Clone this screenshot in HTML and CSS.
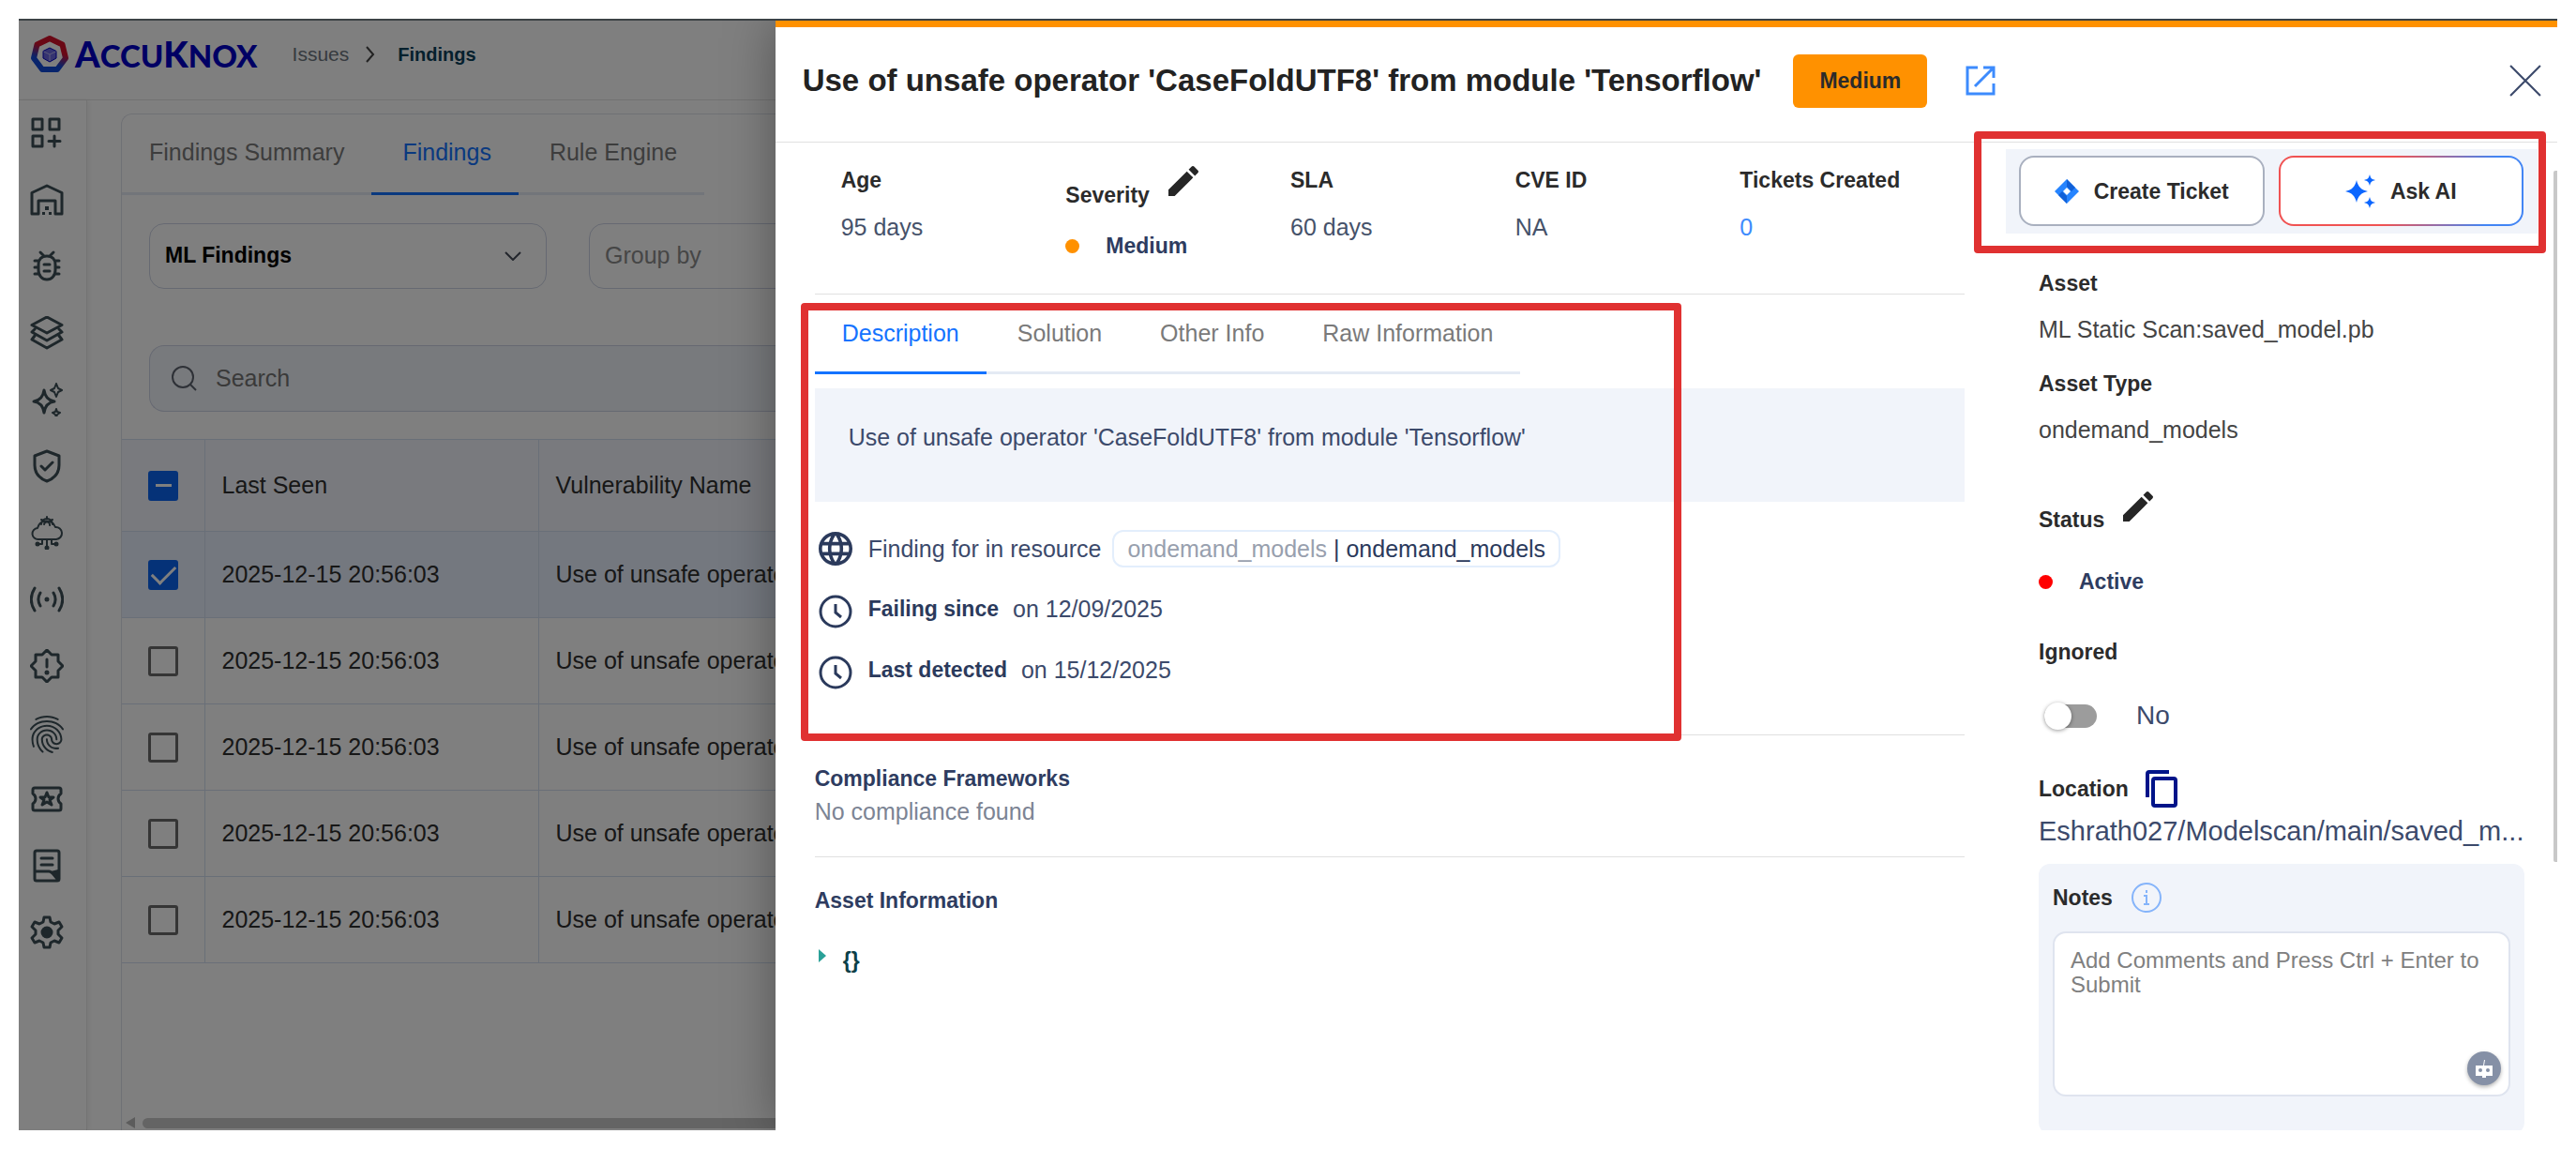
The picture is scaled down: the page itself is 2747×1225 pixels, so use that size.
FILE: index.html
```html
<!DOCTYPE html>
<html lang="en">
<head>
  <meta charset="UTF-8">
  <title>AccuKnox - Findings</title>
  <link rel="stylesheet" href="styles.css">
</head>
<body>

<div class="app">

  <!-- Top bar -->
  <header class="topbar">
    <a class="brand" href="#">
      <svg class="brand-mark" viewBox="0 0 42 42">
        <defs>
          <linearGradient id="brand-ring" x1="0.7" y1="0" x2="0.3" y2="1">
            <stop offset="0.35" stop-color="#d4102a"/>
            <stop offset="0.75" stop-color="#1048d8"/>
          </linearGradient>
        </defs>
        <path d="M21 4 L34.500 10.500 L38 25 L29 37 H13 L4 25 L7.500 10.500 Z" fill="none" stroke="url(#brand-ring)" stroke-width="6" stroke-linejoin="round"/>
        <path d="M21 14 L28 17.500 V25 L21 29 L14 25 V17.500 Z" fill="#6a66e0"/>
        <path d="M14.500 18 L21 21 L27.500 18 M21 21 V28" fill="none" stroke="#b8b6f4" stroke-width="1"/>
      </svg>
      <span class="brand-name"><b>A</b>CCU<b>K</b>NOX</span>
    </a>
    <nav class="breadcrumb">
      <a href="#">Issues</a>
      <svg viewBox="0 0 10 20"><path d="M1 2 L8 10 L1 18"/></svg>
      <a class="current" href="#">Findings</a>
    </nav>
  </header>

  <div class="layout">
    <!-- Icon rail -->
    <nav class="rail">
      <a href="#" aria-label="Dashboard">
        <svg viewBox="0 0 36 36"><path d="M3 3h10v11H3z M21 3h10v11H21z M3 21h10v11H3z M26 21v11 M20 26.500h12"/></svg>
      </a>
      <a href="#" aria-label="Inventory">
        <svg viewBox="0 0 36 36"><path d="M2 33V10.500L18 3l16 7.500V33h-7V19H9v14z"/><path d="M16 25h4v4h-4z M13 31h3v3h-3z M20 31h3v3h-3z" fill="currentColor" stroke="none"/></svg>
      </a>
      <a href="#" aria-label="Issues">
        <svg viewBox="0 0 36 36"><path d="M18 7c-6 0-9 4-9 9v6c0 6 4 10 9 10s9-4 9-10v-6c0-5-3-9-9-9z M11 3l4 4 M25 3l-4 4 M5 12h4 M5 19h4 M5 26h4 M27 12h4 M27 19h4 M27 26h4 M15 16h6 M15 23h6"/></svg>
      </a>
      <a href="#" aria-label="Compliance">
        <svg viewBox="0 0 36 36"><path d="M18 1l16 8.500L18 18 2 9.500z M5 14l-3 3 16 9 16-9-3-3 M5 21l-3 4 16 9 16-9-3-4"/></svg>
      </a>
      <a href="#" aria-label="AI security">
        <svg viewBox="0 0 36 36"><path d="M15 8c1 7 4 11 11 12-7 1-10 5-11 12-1-7-4-11-11-12 7-1 10-5 11-12z"/><path class="thin" d="M28 1l2 5 4 2-4 2-2 5-2-5-4-2 4-2z M28 28l1 3 3 1-3 2-1 3-1-3-3-2 3-1z"/></svg>
      </a>
      <a href="#" aria-label="Runtime protection">
        <svg viewBox="0 0 36 36"><path d="M18 2l13 5v10c0 8-5 14-13 17C10 31 5 25 5 17V7z M12 18l4 4 8-8"/></svg>
      </a>
      <a href="#" aria-label="Cloud workloads">
        <svg viewBox="0 0 36 36"><path class="thin" d="M9 25a6 6 0 0 1-1-12 10 10 0 0 1 19-1 6.500 6.500 0 0 1 1 13z M12 9a6 6 0 1 1 12 0 M15 9a3 3 0 1 1 6 1 M18 25v9 M13 25v5H8 M23 25v5h5"/><circle cx="18" cy="34" r="1"/><circle cx="8" cy="30" r="1"/><circle cx="28" cy="30" r="1"/><path class="thin" d="M12 4l2 1 M24 4l-2 1 M18 1v2"/></svg>
      </a>
      <a href="#" aria-label="Monitoring">
        <svg viewBox="0 0 36 36"><path d="M5 6c-5 8-5 16 0 24 M11 11c-3 5-3 9 0 14 M31 6c5 8 5 16 0 24 M25 11c3 5 3 9 0 14"/><circle cx="18" cy="18" r="1" fill="currentColor"/></svg>
      </a>
      <a href="#" aria-label="Alerts">
        <svg viewBox="0 0 36 36"><path d="M18 1l5 5h7v7l5 5-5 5v7h-7l-5 5-5-5H6v-7l-5-5 5-5V6h7z M18 11v8"/><circle cx="18" cy="25" r="1" fill="currentColor"/></svg>
      </a>
      <a href="#" aria-label="Identity">
        <svg class="filled" viewBox="3 2 18 20"><path d="M17.810 4.470c-.08 0-.16-.02-.23-.06C15.660 3.420 14 3 12.010 3c-1.980 0-3.860.47-5.570 1.410-.24.13-.54.04-.68-.2-.13-.24-.04-.55.2-.68C7.820 2.520 9.860 2 12.010 2c2.130 0 3.990.47 6.030 1.520.25.13.34.43.21.67-.09.18-.26.28-.44.28zM3.500 9.720c-.1 0-.2-.03-.29-.09-.23-.16-.28-.47-.12-.7.99-1.400 2.250-2.500 3.750-3.270C9.980 4.040 14 4.030 17.150 5.650c1.500.77 2.760 1.860 3.750 3.250.16.22.11.54-.12.7-.23.16-.54.11-.7-.12-.9-1.260-2.040-2.250-3.390-2.940-2.870-1.470-6.540-1.470-9.400.01-1.360.7-2.500 1.700-3.400 2.960-.08.14-.23.21-.39.21zm6.250 12.070c-.13 0-.26-.05-.35-.15-.87-.87-1.340-1.430-2.010-2.640-.69-1.230-1.050-2.730-1.050-4.340 0-2.970 2.540-5.390 5.660-5.390s5.660 2.420 5.660 5.390c0 .28-.22.5-.5.5s-.5-.22-.5-.5c0-2.420-2.090-4.390-4.660-4.390-2.570 0-4.660 1.970-4.660 4.390 0 1.440.32 2.770.93 3.850.64 1.150 1.080 1.640 1.850 2.420.19.2.19.51 0 .71-.11.1-.24.15-.37.15zm7.170-1.850c-1.190 0-2.240-.3-3.100-.89-1.490-1.010-2.380-2.650-2.380-4.390 0-.28.22-.5.5-.5s.5.22.5.5c0 1.410.72 2.740 1.940 3.560.71.48 1.540.71 2.540.71.24 0 .64-.03 1.040-.1.27-.05.53.13.58.41.05.27-.13.53-.41.58-.57.11-1.070.12-1.210.12zM14.910 22c-.04 0-.09-.01-.13-.02-1.590-.44-2.630-1.030-3.720-2.100-1.400-1.390-2.170-3.240-2.170-5.220 0-1.620 1.380-2.940 3.080-2.940 1.700 0 3.080 1.320 3.080 2.940 0 1.070.93 1.940 2.080 1.940s2.080-.87 2.080-1.940c0-3.770-3.250-6.830-7.250-6.830-2.840 0-5.440 1.580-6.610 4.030-.39.81-.59 1.760-.59 2.800 0 .78.07 2.010.67 3.610.1.26-.03.55-.29.64-.26.1-.55-.04-.64-.29-.49-1.310-.73-2.610-.73-3.960 0-1.200.23-2.290.68-3.240 1.330-2.790 4.280-4.600 7.510-4.600 4.550 0 8.250 3.510 8.250 7.830 0 1.620-1.380 2.940-3.080 2.940s-3.080-1.320-3.080-2.940c0-1.070-.93-1.940-2.080-1.940s-2.080.87-2.080 1.940c0 1.710.66 3.310 1.870 4.510.95.94 1.860 1.460 3.270 1.850.27.07.42.35.35.61-.05.23-.26.38-.47.38z"/></svg>
      </a>
      <a href="#" aria-label="Tickets">
        <svg viewBox="0 0 36 36"><path d="M5 6h26a2 2 0 0 1 2 2v4c-4 3-4 8 0 11v5a2 2 0 0 1-2 2H5a2 2 0 0 1-2-2v-5c4-3 4-8 0-11V8a2 2 0 0 1 2-2z"/><path d="M18 11l2 5h5l-4 3 2 5-5-3-5 3 2-5-4-3h5z"/></svg>
      </a>
      <a href="#" aria-label="Reports">
        <svg viewBox="0 0 36 36"><path d="M7 2h22a2 2 0 0 1 2 2v28a2 2 0 0 1-2 2H7a2 2 0 0 1-2-2V4a2 2 0 0 1 2-2z M12 10h12 M12 17h12 M6 24h14c4 0 5 4 9 8"/><path d="M22 24c4 2 4 6 8 9V22z" fill="currentColor" stroke="none"/></svg>
      </a>
      <a href="#" aria-label="Settings">
        <svg viewBox="0 0 36 36"><path d="M15 2h6l1 5 4 2 5-2 3 5-4 4v4l4 4-3 5-5-2-4 2-1 5h-6l-1-5-4-2-5 2-3-5 4-4v-4l-4-4 3-5 5 2 4-2z"/><circle cx="18" cy="18" r="5" fill="currentColor"/></svg>
      </a>
    </nav>

    <!-- Findings list -->
    <main class="card">
      <div class="tabs page-tabs">
        <button type="button">Findings Summary</button>
        <button type="button" class="active">Findings</button>
        <button type="button">Rule Engine</button>
      </div>

      <div class="filters">
        <div class="select-box">
          <select class="strong" aria-label="Finding type"><option>ML Findings</option></select>
          <svg viewBox="0 0 18 10"><path d="M1 1l8 8 8-8"/></svg>
        </div>
        <div class="select-box">
          <select class="muted" aria-label="Group by"><option>Group by</option></select>
          <svg viewBox="0 0 18 10"><path d="M1 1l8 8 8-8"/></svg>
        </div>
      </div>

      <label class="search">
        <svg viewBox="0 0 28 28"><circle cx="13" cy="13" r="11"/><path d="M21 21l6 6"/></svg>
        <input type="text" placeholder="Search" aria-label="Search">
      </label>

      <table class="findings">
        <thead>
          <tr>
            <th class="pick"><input type="checkbox" class="mixed" aria-label="Select all"></th>
            <th class="seen">Last Seen</th>
            <th>Vulnerability Name</th>
          </tr>
        </thead>
        <tbody>
          <tr class="selected">
            <td class="pick"><input type="checkbox" checked aria-label="Select row 1"></td>
            <td>2025-12-15 20:56:03</td>
            <td>Use of unsafe operator 'CaseFoldUTF8'</td>
          </tr>
          <tr>
            <td class="pick"><input type="checkbox" aria-label="Select row 2"></td>
            <td>2025-12-15 20:56:03</td>
            <td>Use of unsafe operator 'CaseFoldUTF8'</td>
          </tr>
          <tr>
            <td class="pick"><input type="checkbox" aria-label="Select row 3"></td>
            <td>2025-12-15 20:56:03</td>
            <td>Use of unsafe operator 'CaseFoldUTF8'</td>
          </tr>
          <tr>
            <td class="pick"><input type="checkbox" aria-label="Select row 4"></td>
            <td>2025-12-15 20:56:03</td>
            <td>Use of unsafe operator 'CaseFoldUTF8'</td>
          </tr>
          <tr>
            <td class="pick"><input type="checkbox" aria-label="Select row 5"></td>
            <td>2025-12-15 20:56:03</td>
            <td>Use of unsafe operator 'CaseFoldUTF8'</td>
          </tr>
        </tbody>
      </table>

      <div class="hscroll">
        <svg viewBox="0 0 10 12"><path d="M10 0v12L0 6z"/></svg>
        <span></span>
      </div>
    </main>
  </div>

  <div class="backdrop"></div>

  <!-- Finding details -->
  <aside class="drawer">
    <header class="drawer-head">
      <h1>Use of unsafe operator 'CaseFoldUTF8' from module 'Tensorflow'</h1>
      <span class="badge">Medium</span>
      <a class="open-link" href="#" aria-label="Open in new tab">
        <svg viewBox="0 0 32 32"><path d="M13 2H2v28h28V19 M19 2h11v11 M30 2L10 22"/></svg>
      </a>
      <button type="button" class="close" aria-label="Close">
        <svg viewBox="0 0 32 32"><path d="M1 1l30 30M31 1L1 31"/></svg>
      </button>
    </header>

    <div class="drawer-body">
      <div class="info">
        <div class="facts">
          <div class="fact"><h3>Age</h3><p>95 days</p></div>
          <div class="fact">
            <div class="edit-row">
              <h3>Severity</h3>
              <button type="button" aria-label="Edit severity">
                <svg viewBox="3 3 18 18"><path d="M3 17.250V21h3.750L17.810 9.940l-3.750-3.750L3 17.250zM20.710 7.040c.39-.39.39-1.020 0-1.410l-2.340-2.340c-.39-.39-1.020-.39-1.410 0l-1.830 1.830 3.750 3.750 1.830-1.830z"/></svg>
              </button>
            </div>
            <p class="dotted"><span class="dot orange"></span>Medium</p>
          </div>
          <div class="fact"><h3>SLA</h3><p>60 days</p></div>
          <div class="fact"><h3>CVE ID</h3><p>NA</p></div>
          <div class="fact"><h3>Tickets Created</h3><p><a href="#">0</a></p></div>
        </div>

        <section class="description">
          <div class="tabs">
            <button type="button" class="active">Description</button>
            <button type="button">Solution</button>
            <button type="button">Other Info</button>
            <button type="button">Raw Information</button>
          </div>
          <p class="summary">Use of unsafe operator 'CaseFoldUTF8' from module 'Tensorflow'</p>
          <ul class="timeline">
            <li class="resource">
              <svg class="filled" viewBox="2 2 20 20"><path d="M11.990 2C6.470 2 2 6.480 2 12s4.470 10 9.990 10C17.520 22 22 17.520 22 12S17.520 2 11.990 2zm6.930 6h-2.950c-.32-1.250-.78-2.450-1.380-3.560 1.840.63 3.370 1.910 4.330 3.560zM12 4.040c.83 1.200 1.480 2.530 1.910 3.960h-3.820c.43-1.430 1.080-2.760 1.910-3.960zM4.260 14C4.100 13.360 4 12.690 4 12s.1-1.360.26-2h3.380c-.08.66-.14 1.320-.14 2s.06 1.340.14 2H4.260zm.82 2h2.950c.32 1.250.78 2.450 1.380 3.560-1.840-.63-3.370-1.900-4.330-3.560zm2.950-8H5.080c.96-1.660 2.490-2.930 4.330-3.560C8.810 5.550 8.350 6.750 8.030 8zM12 19.960c-.83-1.200-1.480-2.530-1.910-3.960h3.820c-.43 1.430-1.080 2.760-1.910 3.960zM14.340 14H9.660c-.09-.66-.16-1.320-.16-2s.07-1.350.16-2h4.680c.09.65.16 1.320.16 2s-.07 1.340-.16 2zm.25 5.560c.6-1.110 1.060-2.310 1.380-3.560h2.950c-.96 1.650-2.490 2.930-4.330 3.560zM16.360 14c.08-.66.14-1.320.14-2s-.06-1.340-.14-2h3.380c.16.64.26 1.310.26 2s-.1 1.360-.26 2h-3.380z"/></svg>
              <span>Finding for in resource</span>
              <span class="chip"><span>ondemand_models</span> | ondemand_models</span>
            </li>
            <li>
              <svg viewBox="0 0 36 36"><circle cx="18" cy="18" r="16"/><path d="M18 10v9l6 5"/></svg>
              <strong>Failing since</strong>
              <span>on 12/09/2025</span>
            </li>
            <li>
              <svg viewBox="0 0 36 36"><circle cx="18" cy="18" r="16"/><path d="M18 10v9l6 5"/></svg>
              <strong>Last detected</strong>
              <span>on 15/12/2025</span>
            </li>
          </ul>
          <div class="highlight highlight-description"></div>
        </section>

        <section class="block">
          <h3>Compliance Frameworks</h3>
          <p>No compliance found</p>
        </section>

        <section class="block">
          <h3>Asset Information</h3>
          <button type="button" class="json">
            <svg viewBox="0 0 8 14"><path d="M0 0l8 7-8 7z"/></svg>
            <span>{}</span>
          </button>
        </section>
      </div>

      <div class="side">
        <div class="actions">
          <button type="button" class="ticket">
            <svg viewBox="0 0 26 26">
              <path d="M13 0l13 13-13 13L0 13z" fill="#2684ff"/>
              <path d="M13 0v8l5 5 4-4z M13 26v-8l-5-5-4 4z" fill="#1060d8"/>
              <path d="M13 9l4 4-4 4-4-4z" fill="#fff"/>
            </svg>
            Create Ticket
          </button>
          <button type="button" class="ask">
            <svg viewBox="0 0 32 36"><path d="M12 6c1.500 7 5 10.500 12 12-7 1.500-10.500 5-12 12-1.500-7-5-10.500-12-12 7-1.500 10.500-5 12-12z M26 0c1 4 2 5 6 6-4 1-5 2-6 6-1-4-2-5-6-6 4-1 5-2 6-6z M26 24c1 4 2 5 6 6-4 1-5 2-6 6-1-4-2-5-6-6 4-1 5-2 6-6z"/></svg>
            Ask AI
          </button>
          <div class="highlight highlight-actions"></div>
        </div>

        <div class="details">
          <div class="detail"><h3>Asset</h3><p>ML Static Scan:saved_model.pb</p></div>
          <div class="detail"><h3>Asset Type</h3><p>ondemand_models</p></div>
          <div class="detail status">
            <div class="edit-row">
              <h3>Status</h3>
              <button type="button" aria-label="Edit status">
                <svg viewBox="3 3 18 18"><path d="M3 17.250V21h3.750L17.810 9.940l-3.750-3.750L3 17.250zM20.710 7.040c.39-.39.39-1.020 0-1.410l-2.340-2.340c-.39-.39-1.020-.39-1.410 0l-1.830 1.830 3.750 3.750 1.830-1.830z"/></svg>
              </button>
            </div>
            <p class="dotted"><span class="dot red"></span>Active</p>
          </div>
          <div class="detail ignored">
            <h3>Ignored</h3>
            <label class="switch"><input type="checkbox"><span>No</span></label>
          </div>
          <div class="detail location">
            <div class="copy-row">
              <h3>Location</h3>
              <button type="button" aria-label="Copy location">
                <svg viewBox="0 0 34 40"><path d="M2 29V4a2 2 0 0 1 2-2h21"/><path d="M10 9h20a2 2 0 0 1 2 2v25a2 2 0 0 1-2 2H10a2 2 0 0 1-2-2V11a2 2 0 0 1 2-2z"/></svg>
              </button>
            </div>
            <p class="path">Eshrath027/Modelscan/main/saved_m...</p>
          </div>

          <div class="notes">
            <div class="notes-head">
              <label for="notes">Notes</label>
              <svg viewBox="0 0 32 32"><circle cx="16" cy="16" r="15"/><path d="M13 14h3v9 M13 23h6 M16 8v3"/></svg>
            </div>
            <div class="notes-box">
              <textarea id="notes" autofocus placeholder="Add Comments and Press Ctrl + Enter to Submit"></textarea>
              <button type="button" class="bot" aria-label="Writing assistant">
                <svg viewBox="0 0 20 20"><path d="M1 7h8l1-6h1l-1 6h9v11H1z M8 18h4v2H8z" fill="#fff"/><circle cx="6" cy="12" r="2"/><circle cx="14" cy="12" r="2"/></svg>
              </button>
            </div>
          </div>
        </div>
      </div>
    </div>

    <div class="vscroll"></div>
  </aside>
</div>

</body>
</html>
```
FILE: styles.css
```css
* {
  box-sizing: border-box;
}

body {
  margin: 0;
  padding: 20px;
  background: #fff;
  color: #2b2b2b;
  font-family: "Liberation Sans", Arial, sans-serif;
  font-size: 25px;
  line-height: 30px;
}

h1, h3, p, ul {
  margin: 0;
  padding: 0;
}

h3 {
  font-size: 23px;
  line-height: 30px;
}

a {
  color: inherit;
  text-decoration: none;
}

button {
  padding: 0;
  border: none;
  background: none;
  color: inherit;
  font: inherit;
  cursor: pointer;
}

svg {
  display: block;
  flex: none;
  fill: none;
  stroke: currentColor;
}

.app {
  position: relative;
  display: flex;
  flex-direction: column;
  height: calc(100vh - 40px);
  border-top: 2px solid #3c4246;
  overflow: hidden;
}

/* Top bar */
.topbar {
  display: flex;
  align-items: center;
  gap: 37px;
  height: 85px;
  padding: 0 12px 12px;
  border-bottom: 1px solid #e4e4e4;
}

.brand {
  display: flex;
  align-items: center;
  gap: 6px;
  color: #0000c8;
}

.brand-mark {
  width: 42px;
  height: 42px;
}

.brand-name {
  font-family: Lato, sans-serif;
  font-size: 33px;
  font-weight: 900;
}

.brand-name b {
  font-size: 38px;
}

.breadcrumb {
  display: flex;
  align-items: center;
  gap: 18px;
  color: #6e7680;
  font-size: 21px;
}

.breadcrumb svg {
  width: 10px;
  height: 20px;
  stroke: #444;
  stroke-width: 2;
}

.breadcrumb .current {
  margin-left: 6px;
  color: #08405a;
  font-size: 20px;
  font-weight: bold;
}

.layout {
  display: flex;
  flex: 1;
  min-height: 0;
}

/* Icon rail */
.rail {
  display: flex;
  flex-direction: column;
  flex: none;
  gap: 35px;
  width: 73px;
  padding: 17px 0 0 12px;
  border-right: 1px solid #e8e8e8;
  box-shadow: 2px 0 6px rgba(0, 0, 0, 0.06);
  color: #3c4e56;
}

.rail a {
  height: 36px;
}

.rail svg {
  width: 36px;
  height: 36px;
  stroke-width: 3;
  stroke-linejoin: round;
  stroke-linecap: round;
}

.rail .thin {
  stroke-width: 2;
}

svg.filled {
  fill: currentColor;
  stroke: none;
}

.rail .filled {
  height: 40px;
}

/* Findings list */
.card {
  display: flex;
  flex-direction: column;
  flex: 1;
  min-width: 0;
  margin: 14px 0 0 36px;
  border: 1px solid #dfe2ea;
  border-width: 1px 0 0 1px;
  border-radius: 12px 0 0 0;
}

.tabs {
  display: flex;
  align-self: flex-start;
  width: fit-content;
}

.tabs button {
  padding: 26px 29px 26px;
  border-bottom: 3px solid #e4eaf4;
  color: #7a7a7a;
}

.tabs button + button {
  padding-left: 33px;
}

.tabs .active {
  border-bottom-color: #1473ff;
  color: #1473ff;
}

.page-tabs button {
  padding: 25px 29px 28px;
}

.filters {
  display: flex;
  gap: 45px;
  margin: 30px 0 0 29px;
}

.select-box {
  position: relative;
  width: 424px;
}

.select-box select {
  width: 100%;
  height: 70px;
  padding: 0 16px 2px;
  border: 1px solid #cdd3e4;
  border-radius: 16px;
  background: #fff;
  font: inherit;
  appearance: none;
}

.select-box .strong {
  color: #000;
  font-size: 23px;
  font-weight: bold;
}

.select-box .muted {
  color: #8c8c8c;
}

.select-box svg {
  position: absolute;
  top: 30px;
  right: 27px;
  width: 18px;
  height: 10px;
  stroke: #444b58;
  stroke-width: 2;
}

.search {
  display: flex;
  align-items: center;
  gap: 20px;
  width: 26%;
  height: 71px;
  margin: 60px 0 0 29px;
  padding: 0 22px 2px;
  border: 1px solid #cdd3e4;
  border-right: none;
  border-radius: 16px 0 0 16px;
  background: #f1f4fa;
}

.search svg {
  width: 28px;
  height: 28px;
  stroke: #5c626e;
  stroke-width: 2;
}

.search input {
  flex: 1;
  min-width: 0;
  padding: 0;
  border: none;
  outline: none;
  background: none;
  font: inherit;
}

.search input::placeholder {
  color: #757575;
}

.findings {
  width: 100%;
  margin-top: 29px;
  border-collapse: collapse;
  table-layout: fixed;
  color: #2e2e2e;
}

.findings th,
.findings td {
  height: 92px;
  padding: 0 18px 2px;
  border: 1px solid #d3def0;
  border-left: none;
  font-weight: normal;
  text-align: left;
  white-space: nowrap;
}

.findings th {
  height: 98px;
  background: #f2f5fc;
}

.findings .pick {
  width: 88px;
  padding: 0 28px;
}

.findings .seen {
  width: 356px;
}

.findings .selected td {
  background: #e9f0fe;
}

.findings input {
  display: grid;
  place-items: center;
  width: 32px;
  height: 32px;
  margin: 0;
  border: 3px solid #6a6a6a;
  border-radius: 3px;
  appearance: none;
}

.findings input:checked,
.findings .mixed {
  border-color: #0b64f0;
  background: #0b64f0;
}

.findings input:checked::after {
  content: "";
  width: 22px;
  height: 11px;
  margin-bottom: 6px;
  border: solid #fff;
  border-width: 0 0 3px 3px;
  transform: rotate(-45deg);
}

.findings .mixed::after {
  content: "";
  width: 17px;
  height: 3px;
  background: #fff;
}

.hscroll {
  display: flex;
  align-items: center;
  gap: 8px;
  margin-top: auto;
  padding: 0 0 2px 4px;
}

.hscroll svg {
  width: 10px;
  height: 12px;
  fill: #b8b8b8;
  stroke: none;
}

.hscroll span {
  flex: 1;
  height: 11px;
  border-radius: 6px 0 0 6px;
  background: #c8c8c8;
}

.backdrop {
  position: absolute;
  inset: 0;
  background: rgba(0, 0, 0, 0.5);
}

/* Finding details */
.drawer {
  position: absolute;
  top: 0;
  right: 0;
  bottom: 0;
  width: 70.2%;
  border-top: 7px solid #ff9100;
  background: #fff;
  box-shadow: 0 0 50px rgba(0, 0, 0, 0.35);
  overflow: hidden;
}

.drawer-head {
  display: flex;
  align-items: center;
  height: 123px;
  padding: 0 17px 8px 29px;
  border-bottom: 1px solid #e0e0e0;
}

.drawer-head h1 {
  color: #222;
  font-size: 33px;
  line-height: 40px;
}

.badge {
  margin-left: 34px;
  padding: 13px 28px 14px;
  border-radius: 6px;
  background: #ff9100;
  font-size: 23px;
  font-weight: bold;
}

.open-link {
  margin-left: 41px;
  color: #3d8bfd;
}

.open-link svg {
  width: 32px;
  height: 32px;
  stroke-width: 3;
}

.close {
  margin-left: auto;
  color: #3c4a6b;
}

.close svg {
  width: 34px;
  height: 34px;
  stroke-width: 2;
}

.drawer-body {
  display: grid;
  grid-template-columns: minmax(0, 1fr) 567px;
  gap: 44px;
  padding: 0 21px 0 42px;
}

.facts {
  display: grid;
  grid-template-columns: repeat(5, 1fr);
  padding: 25px 0 36px 28px;
  border-bottom: 1px solid #e0e0e0;
}

.fact p {
  margin-top: 20px;
  color: #46526a;
}

.fact a {
  color: #3d8bfd;
}

.edit-row {
  display: flex;
  align-items: flex-start;
  gap: 20px;
}

.edit-row h3 {
  padding-top: 16px;
}

.edit-row svg {
  width: 32px;
  height: 32px;
  fill: #262626;
  stroke: none;
}

.fact .dotted,
.dotted {
  display: flex;
  align-items: center;
  gap: 28px;
  margin-top: 24px;
  color: #2e3c60;
  font-size: 23px;
  font-weight: bold;
}

.dot {
  width: 15px;
  height: 15px;
  border-radius: 50%;
}

.orange {
  background: #ff9100;
}

.red {
  background: #f00;
}

.description {
  position: relative;
  padding-bottom: 48px;
  border-bottom: 1px solid #e0e0e0;
}

.summary {
  margin-top: 15px;
  padding: 37px 36px 54px;
  background: #f1f4fa;
  color: #3c4a6b;
}

.timeline {
  display: flex;
  flex-direction: column;
  gap: 29px;
  margin-top: 30px;
  padding-left: 4px;
  color: #3c4a6b;
  list-style: none;
}

.timeline li {
  display: flex;
  align-items: flex-start;
}

.timeline .resource {
  align-items: center;
}

.timeline svg {
  width: 36px;
  height: 36px;
  margin-right: 17px;
  color: #2b3a5c;
  stroke-width: 3;
}

.timeline strong {
  margin-right: 15px;
  color: #2b3a5c;
  font-size: 23px;
}

.chip {
  margin-left: 12px;
  padding: 3px 14px;
  border: 2px solid #e3eefc;
  border-radius: 12px;
  color: #2b3a5c;
}

.chip span {
  color: #98a0ae;
}

.block {
  padding: 31px 0 33px;
  border-bottom: 1px solid #e0e0e0;
}

.block:last-child {
  border-bottom: none;
}

.block h3 {
  color: #2e3c60;
}

.block p {
  margin-top: 5px;
  color: #7c8494;
}

.json {
  display: flex;
  gap: 18px;
  margin-top: 34px;
  padding-left: 4px;
  color: #0b4048;
  font-size: 23px;
  font-weight: bold;
}

.json svg {
  width: 8px;
  height: 14px;
  margin-top: 3px;
  fill: #2aa198;
  stroke: none;
}

/* Right column */
.actions {
  position: relative;
  display: grid;
  grid-template-columns: 1fr 1fr;
  gap: 15px;
  margin-top: 7px;
  padding: 7px 15px 8px 14px;
  background: #f1f4fa;
}

.actions button {
  display: flex;
  align-items: center;
  justify-content: center;
  gap: 16px;
  height: 75px;
  border: 2px solid #a9b0bf;
  border-radius: 16px;
  background: #fff;
  font-size: 23px;
  font-weight: bold;
}

.actions .ask {
  border-color: transparent;
  background:
    linear-gradient(#fff, #fff) padding-box,
    linear-gradient(100deg, #f05252 45%, #4285f4 85%) border-box;
}

.ticket svg {
  width: 26px;
  height: 26px;
  stroke: none;
}

.ask svg {
  width: 32px;
  height: 36px;
  fill: #0b66ff;
  stroke: none;
}

.highlight {
  position: absolute;
  border: 8px solid #e03131;
  border-radius: 4px;
  pointer-events: none;
}

.highlight-description {
  top: 9px;
  bottom: -7px;
  left: -15px;
  width: 939px;
}

.highlight-actions {
  inset: -19px -9px -21px -34px;
}

.details {
  padding: 38px 14px 0 35px;
}

.detail {
  margin-bottom: 28px;
}

.detail p {
  margin-top: 19px;
  color: #444;
}

.detail .dotted {
  margin-top: 36px;
  color: #2e3c60;
}

.status {
  margin: 51px 0 45px;
}

.status .edit-row h3 {
  padding-top: 15px;
}

.ignored {
  margin-bottom: 43px;
}

.switch {
  display: flex;
  align-items: center;
  gap: 42px;
  margin-top: 38px;
  padding-left: 6px;
  color: #3c4a6b;
  font-size: 28px;
}

.switch input {
  display: flex;
  align-items: center;
  width: 56px;
  height: 25px;
  margin: 0;
  border-radius: 13px;
  background: #9c9c9c;
  appearance: none;
}

.switch input::before {
  content: "";
  width: 29px;
  height: 29px;
  border-radius: 50%;
  background: #fff;
  box-shadow: 0 1px 4px rgba(0, 0, 0, 0.4);
}

.location {
  margin-bottom: 18px;
}

.copy-row {
  display: flex;
  align-items: center;
  gap: 18px;
}

.copy-row svg {
  width: 34px;
  height: 40px;
  color: #001489;
  stroke-width: 4;
}

.detail .path {
  margin-top: 8px;
  color: #3c4a6b;
  font-size: 29px;
  line-height: 34px;
  white-space: nowrap;
}

.notes {
  padding: 20px 15px 40px;
  border-radius: 12px;
  background: #f1f4fa;
}

.notes-head {
  display: flex;
  align-items: center;
  gap: 20px;
  font-size: 23px;
  font-weight: bold;
}

.notes-head svg {
  width: 32px;
  height: 32px;
  color: #85b4fa;
  stroke-width: 2;
}

.notes-box {
  position: relative;
  margin-top: 20px;
}

.notes textarea {
  display: block;
  width: 100%;
  height: 176px;
  padding: 16px 17px;
  border: 2px solid #dfe4ef;
  border-radius: 14px;
  outline: none;
  background: #fff;
  color: #2e3c60;
  font: inherit;
  font-size: 24px;
  line-height: 26px;
  resize: none;
}

.notes textarea::placeholder {
  color: #808080;
}

.bot {
  position: absolute;
  right: 10px;
  bottom: 12px;
  display: grid;
  place-items: center;
  width: 36px;
  height: 36px;
  border-radius: 50%;
  background: #8590a6;
  box-shadow: 0 2px 4px rgba(0, 0, 0, 0.3);
}

.bot svg {
  width: 20px;
  height: 20px;
  fill: #8590a6;
  stroke: none;
}

.vscroll {
  position: absolute;
  top: 153px;
  right: 0;
  width: 4px;
  height: 737px;
  border-radius: 2px 0 0 2px;
  background: #c8c8c8;
}
```
